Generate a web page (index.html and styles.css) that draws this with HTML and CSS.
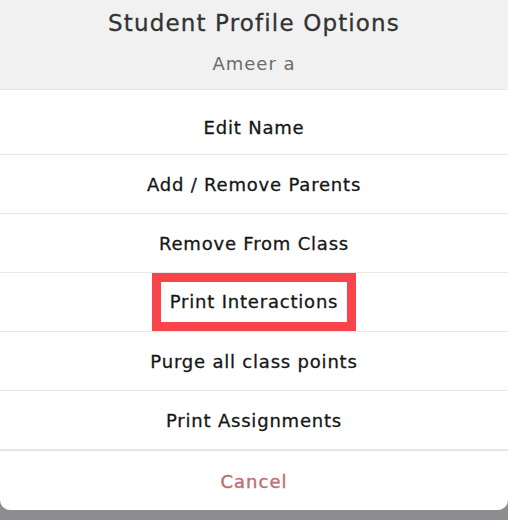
FILE: index.html
```html
<!DOCTYPE html>
<html>
<head>
<meta charset="utf-8">
<link rel="stylesheet" href="styles.css">
</head>
<body>
<div class="sheet">
  <div class="header">
    <div class="title">Student Profile Options</div>
    <div class="subtitle">Ameer a</div>
  </div>
  <div class="list">
    <div class="item first">Edit Name</div>
    <div class="item">Add / Remove Parents</div>
    <div class="item">Remove From Class</div>
    <div class="item"><span class="highlight">Print Interactions</span></div>
    <div class="item">Purge all class points</div>
    <div class="item">Print Assignments</div>
    <div class="item cancel">Cancel</div>
  </div>
</div>
</body>
</html>
```
FILE: styles.css
```css
html, body {
  margin: 0;
  padding: 0;
}
body {
  width: 508px;
  height: 520px;
  background: #8d8d91;
  font-family: "DejaVu Sans", "Noto Sans", sans-serif;
  overflow: hidden;
}
.sheet {
  width: 508px;
  height: 510px;
  background: #ffffff;
  border-radius: 0 0 10px 10px;
  overflow: hidden;
  display: flex;
  flex-direction: column;
}
.header {
  height: 90px;
  box-sizing: border-box;
  background: #f1f1f1;
  border-bottom: 1px solid #e6e6e6;
  display: flex;
  flex-direction: column;
  align-items: center;
  padding-top: 8px;
}
.title {
  font-size: 23px;
  color: #333333;
  line-height: 30px;
  letter-spacing: 1.15px;
  -webkit-text-stroke: 0.3px #333333;
}
.subtitle {
  margin-top: 14px;
  font-size: 18px;
  color: #6b6b6b;
  line-height: 24px;
  letter-spacing: 1px;
}
.list {
  display: flex;
  flex-direction: column;
}
.item {
  height: 59px;
  box-sizing: border-box;
  border-bottom: 1px solid #e8e8e8;
  display: flex;
  align-items: center;
  justify-content: center;
  font-size: 18px;
  color: #161616;
  letter-spacing: 0.8px;
  -webkit-text-stroke: 0.3px #161616;
}
.item.first {
  height: 65px;
  padding-top: 10px;
}
.item.cancel {
  border-bottom: none;
  border-top: 1px solid #e2e2e2;
  color: #c26e70;
  -webkit-text-stroke: 0.4px #c26e70;
  letter-spacing: 1px;
  padding-top: 2px;
}
.highlight {
  border: 9px solid #f8444a;
  padding: 9px 9px 10px 9px;
  background: #ffffff;
}
```
